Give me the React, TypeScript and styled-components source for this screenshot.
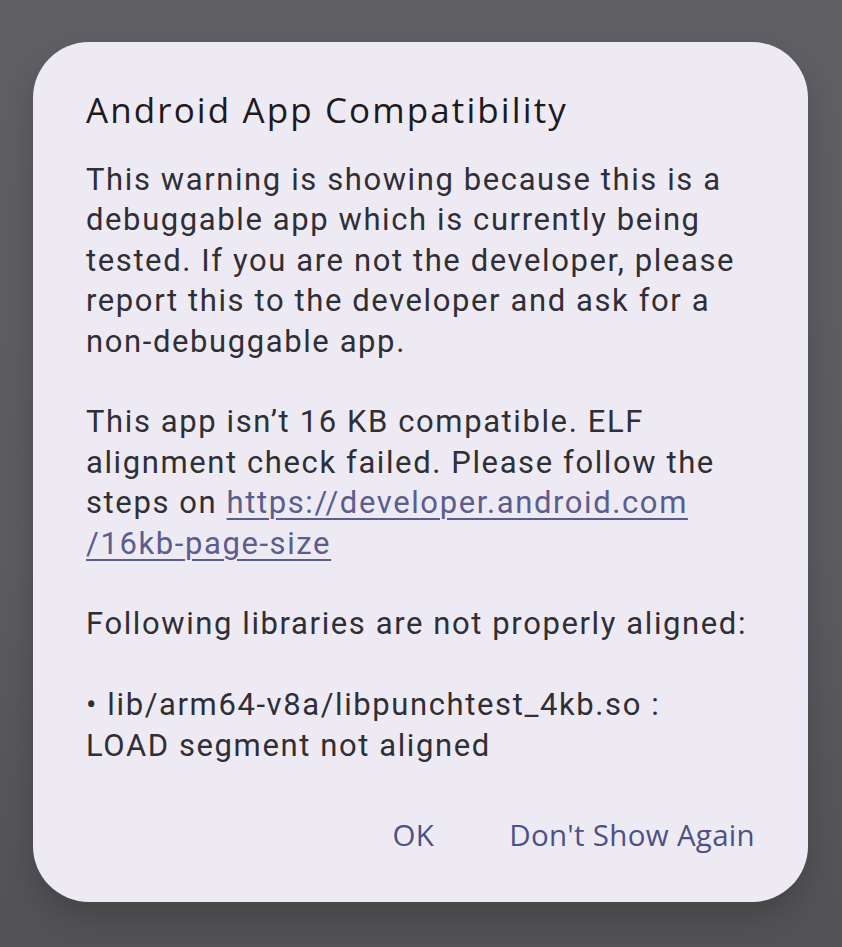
import React from 'react';
import styled, { createGlobalStyle } from 'styled-components';

const GlobalStyle = createGlobalStyle`
  html, body {
    margin: 0;
    padding: 0;
    height: 100%;
  }
  body {
    background: linear-gradient(to bottom, #605f64 0%, #5c5b60 60%, #525155 100%);
    font-family: Roboto, 'Noto Sans', sans-serif;
  }
`;

const Screen = styled.div`
  width: 842px;
  height: 947px;
  box-sizing: border-box;
  padding: 42px 34px 0 33px;
`;

const Dialog = styled.div`
  width: 775px;
  box-sizing: border-box;
  background: #eeeaf4;
  border-radius: 56px;
  padding: 46px 53px 47px 53px;
  display: flex;
  flex-direction: column;
  box-shadow: 0 14px 30px rgba(0, 0, 0, 0.18);
`;

const Title = styled.h2`
  margin: 0;
  font-family: 'Open Sans', Roboto, sans-serif;
  font-weight: 400;
  font-size: 35px;
  line-height: 44px;
  color: #1d1b20;
  letter-spacing: 2.1px;
`;

const Body = styled.div`
  margin-top: 28px;
  font-size: 31px;
  line-height: 40.4px;
  letter-spacing: 1.6px;
  color: #302f35;
`;

const Para = styled.p`
  margin: 0 0 40.4px 0;
  &:last-child {
    margin-bottom: 0;
  }
`;

const Link = styled.a`
  color: #5b5d8c;
  text-decoration: underline;
  text-decoration-thickness: 2px;
  text-underline-offset: 5px;
`;

const Actions = styled.div`
  margin-top: 49px;
  display: flex;
  justify-content: flex-end;
  gap: 75px;
`;

const TextButton = styled.button`
  border: none;
  background: none;
  padding: 0;
  font-family: 'Open Sans', Roboto, sans-serif;
  font-weight: 500;
  font-size: 29.5px;
  line-height: 40px;
  letter-spacing: 0.3px;
  color: #4c5283;
  cursor: pointer;
`;

export default function App() {
  return (
    <>
      <GlobalStyle />
      <Screen>
        <Dialog>
          <Title>Android App Compatibility</Title>
          <Body>
            <Para>
              This warning is showing because this is a debuggable app which is currently being
              tested. If you are not the developer, please report this to the developer and ask
              for a non-debuggable app.
            </Para>
            <Para>
              This app isn’t 16 KB compatible. ELF alignment check failed. Please follow the
              steps on <Link href="#">https://developer.android.com<br />/16kb-page-size</Link>
            </Para>
            <Para>Following libraries are not properly aligned:</Para>
            <Para>
              • lib/arm64-v8a/libpunchtest_4kb.so :<br />
              LOAD segment not aligned
            </Para>
          </Body>
          <Actions>
            <TextButton>OK</TextButton>
            <TextButton>Don't Show Again</TextButton>
          </Actions>
        </Dialog>
      </Screen>
    </>
  );
}
